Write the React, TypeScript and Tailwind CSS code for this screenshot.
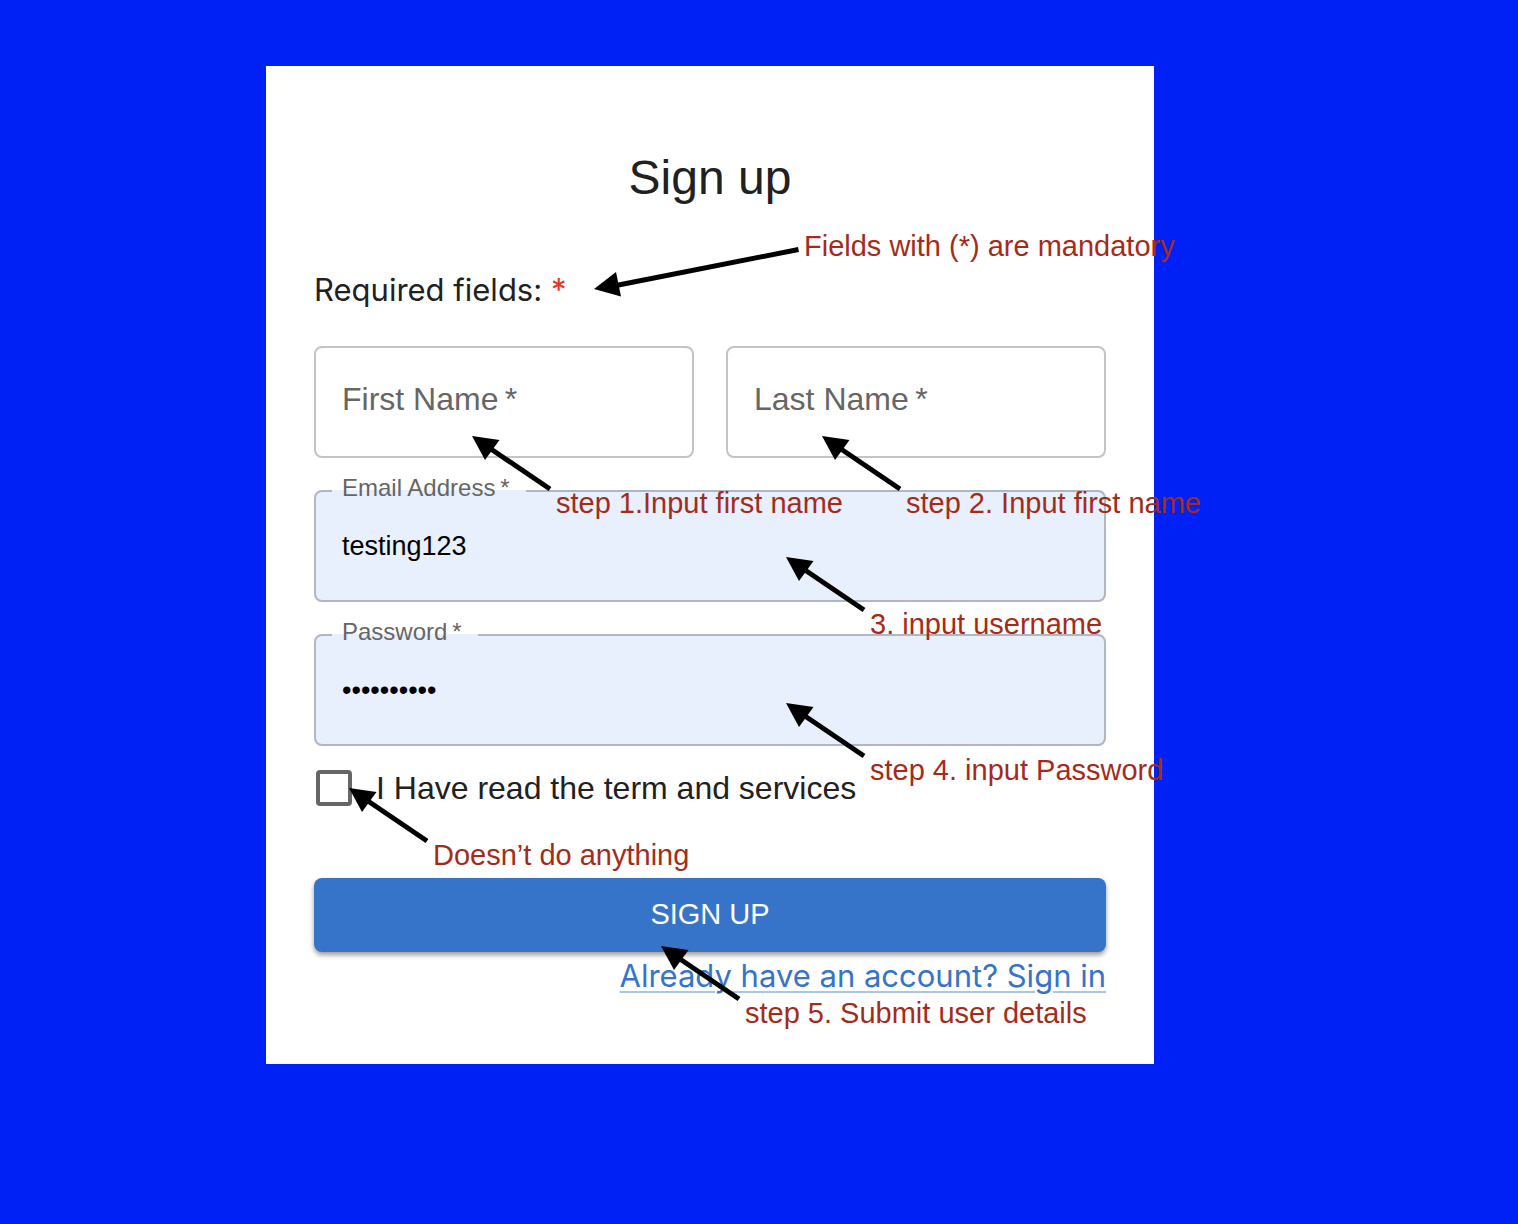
import React, { useState } from "react";

type NoteProps = { className: string; children: React.ReactNode };

/* A remark with an arrow that points up and to the left at a control. */
function Note({ className, children }: NoteProps) {
  return (
    <div
      className={`pointer-events-none absolute z-10 flex items-start gap-1 whitespace-nowrap text-[29px] leading-8 text-[#a52b19] ${className}`}
    >
      <svg className="h-14 w-20 shrink-0" viewBox="0 0 80 56" aria-hidden="true">
        <path d="M16 11 78 53" stroke="#000" strokeWidth="5" fill="none" />
        <path d="M0 0 27.500 4 13 24Z" fill="#000" />
      </svg>
      <span className="mt-[51px]">{children}</span>
    </div>
  );
}

type FieldProps = {
  id: string;
  label: string;
  type?: string;
  initial?: string;
  children?: React.ReactNode;
};

/* Outlined text box: the label sits inside while empty, and in a notch of the border once filled. */
function Field({ id, label, type = "text", initial = "", children }: FieldProps) {
  const [value, setValue] = useState(initial);
  const filled = value !== "";
  return (
    <div className="relative">
      <fieldset
        className={`h-28 min-w-0 rounded-lg border-2 ${
          filled ? "border-[#b1b6c3] bg-[#e8effd]" : "border-[#c4c4c4] bg-white"
        }`}
      >
        {filled && (
          <legend className="ml-4 flex h-0.5 items-center pr-4 pl-2.5">
            <label htmlFor={id} className="pb-1.5 text-2xl whitespace-nowrap text-[#666]">
              {label}&#8201;*
            </label>
          </legend>
        )}
        <input
          id={id}
          type={type}
          required
          value={value}
          onChange={(e) => setValue(e.target.value)}
          className="block h-[108px] w-full bg-transparent px-[26px] text-[27px] text-black outline-none"
        />
      </fieldset>
      {!filled && (
        <label
          htmlFor={id}
          className="pointer-events-none absolute inset-x-7 top-7 text-[32px] leading-[50px] whitespace-nowrap text-[#666]"
        >
          {label}&#8201;*
        </label>
      )}
      {children}
    </div>
  );
}

export default function App() {
  return (
    <div className="min-h-screen overflow-x-hidden bg-[#0021f5] pt-[66px] pr-[98px] pb-40 font-['Liberation_Sans',Arial,sans-serif] text-[#212121]">
      <main className="mx-auto w-full max-w-[888px] bg-white px-12 pt-20 pb-16">
        <h1 className="text-center text-5xl leading-[64px]">Sign up</h1>
        <form onSubmit={(e) => e.preventDefault()}>
          <div className="relative mt-14 mb-8">
            <p className="font-['Inter',sans-serif] text-[31px] leading-[48px]">
              Required fields: <span className="text-[#ea3323]">*</span>
            </p>
            <div className="pointer-events-none absolute -top-9 left-[280px] z-10 flex items-start gap-1 whitespace-nowrap text-[29px] leading-8 text-[#a52b19]">
              <svg className="mt-4 h-[52px] w-[206px] shrink-0" viewBox="0 0 206 52" aria-hidden="true">
                <path d="M22 39.500 204.500 3.500" stroke="#000" strokeWidth="5" fill="none" />
                <path d="M0 43 22 26 27 50.500Z" fill="#000" />
              </svg>
              <span>Fields with (*) are mandatory</span>
            </div>
          </div>

          <div className="grid grid-cols-2 gap-8">
            <Field id="first-name" label="First Name">
              <Note className="top-[90px] left-[158px]">step 1.Input first name</Note>
            </Field>
            <Field id="last-name" label="Last Name">
              <Note className="top-[90px] left-[96px]">step 2. Input first name</Note>
            </Field>
            <div className="col-span-2">
              <Field id="email" label="Email Address" initial="testing123">
                <Note className="top-[67px] left-[472px]">3. input username</Note>
              </Field>
            </div>
            <div className="col-span-2">
              <Field id="password" label="Password" type="password" initial="testing123">
                <Note className="top-[69px] left-[472px]">step 4. input Password</Note>
              </Field>
            </div>
          </div>

          <div className="relative flex h-[84px] items-center gap-6 pl-0.5">
            <input
              id="terms"
              type="checkbox"
              className="size-9 shrink-0 appearance-none rounded border-4 border-[#666] bg-white checked:bg-[#3674c9]"
            />
            <label htmlFor="terms" className="text-[32px]">
              I Have read the term and services
            </label>
            <Note className="top-[42px] left-[35px]">Doesn’t do anything</Note>
          </div>

          <div className="relative mt-12">
            <button
              type="submit"
              className="block h-[74px] w-full rounded-lg bg-[#3674c9] text-[29px] text-white uppercase shadow-[0_3px_5px_rgba(0,0,0,0.4)]"
            >
              Sign up
            </button>
            <Note className="top-[68px] left-[347px]">step 5. Submit user details</Note>
          </div>

          <div className="text-right font-['Inter',sans-serif] text-[31px] leading-[48px]">
            <a
              href="#sign-in"
              className="text-[#3674c9] underline decoration-[#a9c5ea] decoration-2 underline-offset-4"
            >
              Already have an account? Sign in
            </a>
          </div>
        </form>
      </main>
    </div>
  );
}
